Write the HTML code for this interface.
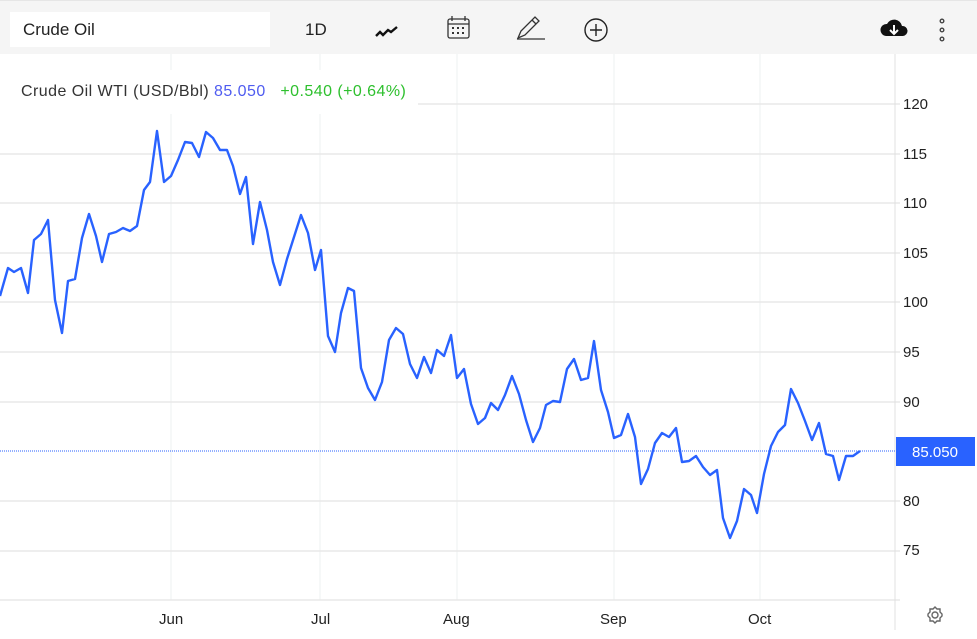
<!DOCTYPE html>
<html><head><meta charset="utf-8"><style>
body{margin:0;width:977px;height:639px;overflow:hidden;background:#fff;font-family:"Liberation Sans",Arial,sans-serif;position:relative}
.tb{position:absolute;left:0;top:0;width:977px;height:54px;background:#f5f5f5;border-top:1px solid #e6e6e6;box-sizing:border-box}
.search{position:absolute;left:10px;top:11px;width:260px;height:35px;background:#fff;font-size:17px;color:#222;line-height:35px;padding-left:13px;box-sizing:border-box}
.ax{position:absolute;left:903px;font-size:15px;color:#222}
.mx{position:absolute;top:611px;font-size:15px;color:#222}
</style></head><body>
<div class="tb">
<div class="search">Crude Oil</div>
<div style="position:absolute;left:305px;top:19px;font-size:17px;color:#222">1D</div>
<svg style="position:absolute;left:0;top:0" width="977" height="54">
<path d="M376 35 L380 31 L383 34 L388 29 L391 31 L397 26" stroke="#111" stroke-width="2.4" fill="none"/>
<g fill="none" stroke="#333" stroke-width="1.3"><rect x="448" y="18" width="21" height="19" rx="2"/><line x1="448" y1="23" x2="469" y2="23"/><line x1="452" y1="15" x2="452" y2="20"/><line x1="465" y1="15" x2="465" y2="20"/></g>
<g fill="#333"><rect x="452" y="26" width="2" height="2"/><rect x="457" y="26" width="2" height="2"/><rect x="462" y="26" width="2" height="2"/><rect x="452" y="31" width="2" height="2"/><rect x="457" y="31" width="2" height="2"/><rect x="462" y="31" width="2" height="2"/></g>
<g fill="none" stroke="#333" stroke-width="1.3"><path d="M518 37 L521 30 L535 16 L539 20 L525 34 Z"/><line x1="532" y1="19" x2="536" y2="23"/><line x1="517" y1="38" x2="545" y2="38"/></g>
<circle cx="596" cy="29" r="11" fill="none" stroke="#222" stroke-width="1.4"/><path d="M590 29h12M596 23v12" stroke="#222" stroke-width="1.4"/>
<path d="M886 35 a6 6 0 0 1 1-12 a8 8 0 0 1 15 2 a5 5 0 0 1 1 10 Z" fill="#111"/><path d="M894 24v8M890 29l4 4 4-4" stroke="#fff" stroke-width="2" fill="none"/>
<g fill="none" stroke="#444" stroke-width="1.4"><circle cx="942" cy="20" r="1.8"/><circle cx="942" cy="29" r="1.8"/><circle cx="942" cy="38" r="1.8"/></g>
</svg>
</div>
<svg style="position:absolute;left:0;top:54px" width="977" height="585" viewBox="0 54 977 585">
<g stroke="#eef0f0" stroke-width="1">
<line x1="171" y1="54" x2="171" y2="600"/><line x1="320" y1="54" x2="320" y2="600"/><line x1="457" y1="54" x2="457" y2="600"/><line x1="614" y1="54" x2="614" y2="600"/><line x1="760" y1="54" x2="760" y2="600"/>
</g>
<g stroke="#e8e8e8" stroke-width="1.5">
<line x1="0" y1="104" x2="900" y2="104"/><line x1="0" y1="154" x2="900" y2="154"/><line x1="0" y1="203" x2="900" y2="203"/><line x1="0" y1="253" x2="900" y2="253"/><line x1="0" y1="302" x2="900" y2="302"/><line x1="0" y1="352" x2="900" y2="352"/><line x1="0" y1="402" x2="900" y2="402"/><line x1="0" y1="501" x2="900" y2="501"/><line x1="0" y1="551" x2="900" y2="551"/><line x1="0" y1="600" x2="900" y2="600"/>
</g>
<line x1="895" y1="54" x2="895" y2="630" stroke="#e0e0e0" stroke-width="1"/>
<line x1="0" y1="451" x2="896" y2="451" stroke="#2962ff" stroke-width="1" stroke-dasharray="1,1"/>
<rect x="0" y="70" width="418" height="44" fill="#fff"/>
<polyline fill="none" stroke="#2962ff" stroke-width="2.4" stroke-linejoin="round" points="0,296 8,268 14,272 21,268 28,293 34,240 41,234 48,220 55,300 62,333 68,281 75,279 82,238 89,214 96,236 102,262 109,234 116,232 123,228 130,231 137,226 144,190 150,182 157,131 164,182 171,176 178,160 185,142 192,143 199,157 206,132 213,138 220,150 227,150 233,166 240,194 246,177 253,244 260,202 267,230 273,262 280,285 287,259 294,237 301,215 308,233 315,270 321,250 328,336 335,352 341,313 348,288 354,291 361,368 368,388 375,400 382,382 389,340 396,328 403,334 410,364 417,378 424,357 431,373 437,350 444,356 451,335 457,378 464,369 471,404 478,424 485,418 491,403 498,410 505,395 512,376 519,394 526,420 533,442 540,428 546,405 553,401 560,402 567,369 574,359 581,380 588,378 594,341 601,390 608,412 614,438 621,435 628,414 635,437 641,484 648,469 655,443 662,433 669,437 676,428 682,462 689,461 696,456 703,467 710,475 717,470 723,518 730,538 737,521 744,489 751,495 757,513 764,474 771,446 778,432 785,425 791,389 798,403 805,421 812,440 819,423 826,454 833,456 839,480 846,456 853,456 860,451"/>
<rect x="896" y="437" width="79" height="29" fill="#2962ff"/>
<text x="935" y="457" fill="#fff" font-size="15" text-anchor="middle" font-family="Liberation Sans,sans-serif">85.050</text>
<g transform="translate(935,615)" fill="none" stroke="#666" stroke-width="1.4"><circle r="3"/><path d="M0-8 L2-6 L5-6 L5-3 L7-1 L7 1 L5 3 L5 6 L2 6 L0 8 L-2 6 L-5 6 L-5 3 L-7 1 L-7-1 L-5-3 L-5-6 L-2-6 Z"/></g>
</svg>
<div style="position:absolute;left:21px;top:83px;font-size:16px;letter-spacing:0.45px;color:#333;white-space:nowrap">Crude Oil WTI (USD/Bbl) <span style="color:#4f5cf0">85.050</span>&nbsp;&nbsp; <span style="color:#2ec02e">+0.540 (+0.64%)</span></div>
<div class="ax" style="top:96px">120</div><div class="ax" style="top:146px">115</div><div class="ax" style="top:195px">110</div><div class="ax" style="top:245px">105</div><div class="ax" style="top:294px">100</div><div class="ax" style="top:344px">95</div><div class="ax" style="top:394px">90</div><div class="ax" style="top:493px">80</div><div class="ax" style="top:542px">75</div>
<div class="mx" style="left:159px">Jun</div><div class="mx" style="left:311px">Jul</div><div class="mx" style="left:443px">Aug</div><div class="mx" style="left:600px">Sep</div><div class="mx" style="left:748px">Oct</div>
</body></html>
